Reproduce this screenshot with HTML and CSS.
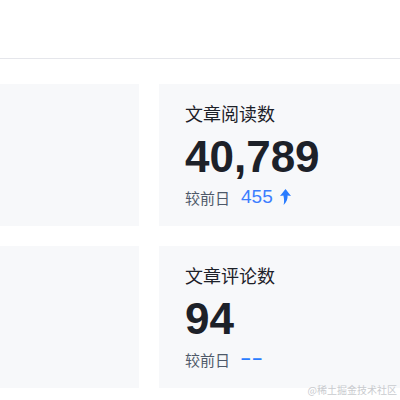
FILE: index.html
```html
<!DOCTYPE html>
<html lang="zh">
<head>
<meta charset="utf-8">
<link rel="stylesheet" href="styles.css">
</head>
<body>
<header class="topbar"></header>
<main class="grid">
  <section class="card"></section>
  <section class="card">
    <div class="title">文章阅读数</div>
    <div class="value">40,789</div>
    <div class="compare">
      <span class="label">较前日</span>
      <span class="delta">455</span>
      <svg class="arrow" viewBox="0 0 11 16" width="11" height="16" aria-hidden="true">
        <path d="M5.5 0 L11 7 L7.6 6.6 C7.8 10.2 6.6 13.4 3.6 16 C4.4 13 4.2 10 3.4 6.6 L0 7 Z" fill="#2a7cff"/>
      </svg>
    </div>
  </section>
  <section class="card"></section>
  <section class="card">
    <div class="title">文章评论数</div>
    <div class="value">94</div>
    <div class="compare">
      <span class="label">较前日</span>
      <span class="delta dash">––</span>
    </div>
  </section>
</main>
<div class="watermark">@稀土掘金技术社区</div>
</body>
</html>
```

FILE: styles.css
```css
html, body {
  margin: 0;
  padding: 0;
  background: #ffffff;
}
body {
  width: 400px;
  height: 400px;
  overflow: hidden;
  position: relative;
  font-family: "Noto Sans CJK SC", "Liberation Sans", sans-serif;
  color: #1d2129;
}
.topbar {
  height: 58px;
  border-bottom: 1px solid #e5e6eb;
}
.grid {
  display: grid;
  grid-template-columns: 139px 1fr;
  grid-auto-rows: 142px;
  column-gap: 20px;
  row-gap: 20px;
  padding-top: 25px;
}
.card {
  background: #f7f8fa;
  padding: 16px 0 0 26px;
  box-sizing: border-box;
}
.title {
  font-size: 18px;
  line-height: 26px;
  color: #1d2129;
}
.value {
  margin-top: 6px;
  font-family: "Liberation Sans", Arial, sans-serif;
  font-weight: 700;
  font-size: 44px;
  line-height: 50px;
  color: #1d2129;
}
.compare {
  margin-top: 4px;
  height: 22px;
  display: flex;
  align-items: center;
}
.label {
  font-size: 15px;
  color: #4e5969;
}
.delta {
  margin-left: 11px;
  font-family: "Liberation Sans", Arial, sans-serif;
  font-size: 19px;
  color: #3c7eff;
}
.dash {
  font-size: 17px;
  font-weight: 700;
  letter-spacing: 2px;
  color: #2a7cff;
}
.arrow {
  margin-left: 7px;
  display: block;
}
.watermark {
  position: absolute;
  right: 3px;
  bottom: 3px;
  font-family: "Noto Sans CJK SC", sans-serif;
  font-size: 10px;
  line-height: 14px;
  color: #c9cbcf;
}
```
